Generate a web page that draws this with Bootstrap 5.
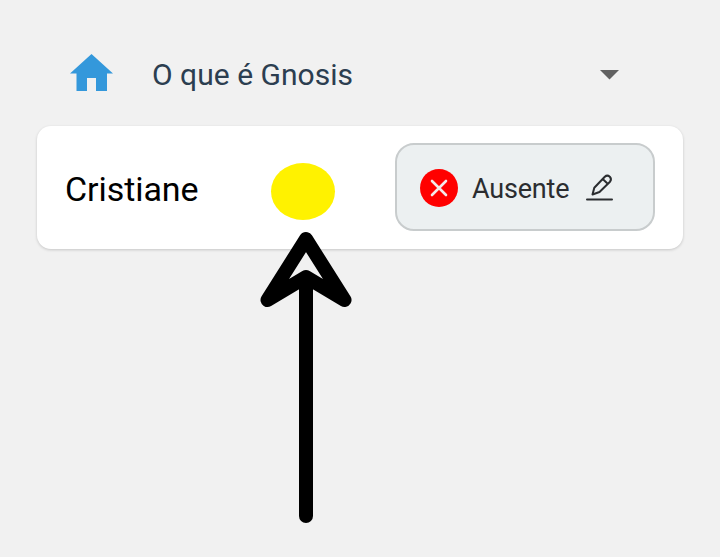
<!DOCTYPE html>
<html lang="pt-BR">
<head>
<meta charset="utf-8">
<meta name="viewport" content="width=device-width, initial-scale=1">
<title>O que é Gnosis</title>
<link href="https://cdn.jsdelivr.net/npm/bootstrap@5.3.0/dist/css/bootstrap.min.css" rel="stylesheet">
<style>
  body { background: #f1f1f1; font-family: Roboto, "Liberation Sans", sans-serif; height: 557px; overflow: hidden; }
  svg { display: block; flex: none; }
  .topic { height: 126px; padding: 24px 101px 0 70px; }
  .home { margin-bottom: 5px; }
  .topic-name { font-size: 30px; line-height: 34px; color: #2c3e50; margin-left: 39px; letter-spacing: .02px; }
  .person { height: 123px; margin: 0 37px; padding: 0 28px; border-radius: 14px; box-shadow: 0 1px 3px rgba(0,0,0,.18); }
  .person-name { font-size: 34px; line-height: 40px; color: #000; margin-top: 3px; letter-spacing: -.08px; }
  .status { width: 260px; height: 88px; margin-bottom: 1px; border: 2px solid #c8cccd; border-radius: 19px; background: #ecf0f1; padding: 2px 39px 0 22px; color: #2b2d30; }
  .status:hover { background: #e4e9ea; border-color: #c8cccd; }
  .status-label { font-size: 27px; line-height: 32px; margin: 2px 0 0 13px; letter-spacing: -.2px; }
  .pointer { left: 255px; top: 155px; pointer-events: none; }
</style>
<script src="https://cdn.jsdelivr.net/npm/bootstrap@5.3.0/dist/js/bootstrap.bundle.min.js"></script>
</head>
<body class="position-relative">
  <header class="topic d-flex align-items-center">
    <svg width="43" height="37" viewBox="0 0 43 37" class="home" fill="#3498db"><path d="M21.5 0 43 19.5H37V37H26V24H17V37H6.500V19.500H0Z"/></svg>
    <span class="topic-name">O que é Gnosis</span>
    <svg class="ms-auto" width="19" height="10" viewBox="0 0 19 10" fill="#616161"><path d="M0 0H19L9.500 9.500Z"/></svg>
  </header>
  <main class="person bg-white d-flex align-items-center justify-content-between">
    <span class="person-name">Cristiane</span>
    <button type="button" class="status btn d-flex align-items-center">
      <svg width="40" height="40" viewBox="0 0 40 40"><circle cx="20" cy="20" r="19" fill="#f00"/><path d="M13 13 27 27M27 13 13 27" stroke="#f4e9ea" stroke-width="2.600" stroke-linecap="round"/></svg>
      <span class="status-label">Ausente</span>
      <svg class="ms-auto" width="30" height="30" viewBox="0 0 30 30" fill="none" stroke="#2b2d30" stroke-width="2" stroke-linecap="round" stroke-linejoin="round"><path d="M3 26.500H28M8.500 21.500 10.300 14.800 20.800 3.800Q23.200 1.500 25.800 3.700Q28 6 26 8.700L15.500 19ZM18.700 6 23.700 10.700"/></svg>
    </button>
  </main>
  <svg class="pointer position-absolute" width="105" height="375" viewBox="255 155 105 375">
    <ellipse cx="303" cy="191.500" rx="32" ry="28.500" fill="#fff200"/>
    <path d="M306 239 267.500 300 306 277 344.500 300ZM306 277V516" fill="none" stroke="#000" stroke-width="14" stroke-linecap="round" stroke-linejoin="round"/>
  </svg>
</body>
</html>
